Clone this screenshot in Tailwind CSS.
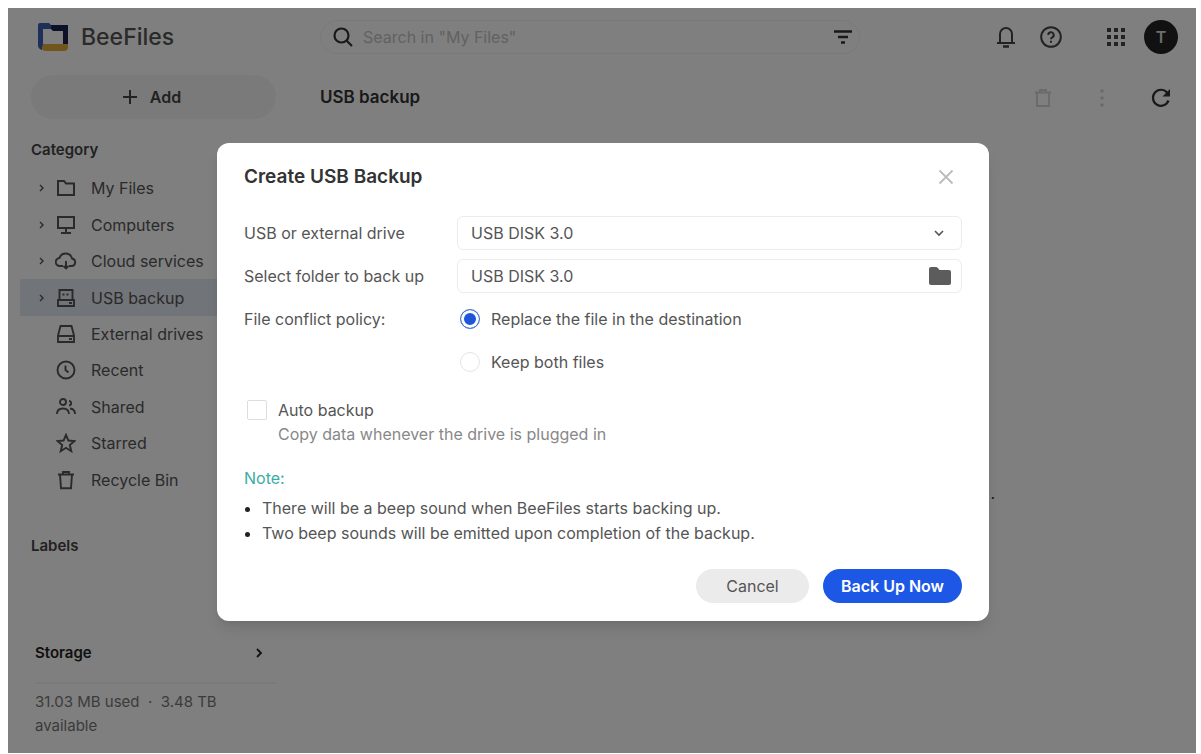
<!DOCTYPE html>
<html lang="en">
<head>
  <meta charset="UTF-8" />
  <meta name="viewport" content="width=device-width, initial-scale=1.0" />
  <title>BeeFiles - USB backup</title>
  <script src="https://cdn.jsdelivr.net/npm/@tailwindcss/browser@4"></script>
</head>
<body class="bg-white font-['Inter',sans-serif] text-[#555]">
  <div class="min-h-screen pt-2 pl-2 pr-[5px] pb-px flex">
    <div class="relative flex-1 flex bg-white">

      <!-- Sidebar -->
      <aside class="w-[312px] shrink-0 flex flex-col">
        <div class="h-[58px] pl-[30px] flex items-center gap-3">
          <svg class="w-[31px] h-7" viewBox="0 0 31 28" aria-hidden="true">
            <path d="M0 2a2 2 0 0 1 2-2h9l2 2v4H5v16l-1 5q-4-1-4-5z" fill="#3c60b4" />
            <path d="M13 2h17v19h-5V8H15l-2-2z" fill="#18224f" />
            <path d="M5 21h25v3q0 4-4 4H8q-4 0-4-3z" fill="#e0ad38" />
          </svg>
          <span class="text-[23px] font-medium">BeeFiles</span>
        </div>

        <button type="button" class="ml-[23px] mr-11 mt-[9px] h-11 rounded-full bg-[#f4f4f4] flex items-center justify-center gap-3 pr-1 text-base font-semibold text-[#444]">
          <svg class="w-4 h-4" viewBox="0 0 16 16" fill="none" stroke="currentColor" stroke-width="2" aria-hidden="true"><path d="M8 1v14M1 8h14" /></svg>
          Add
        </button>

        <h2 class="mt-[21px] ml-[23px] text-[15px] leading-5 font-semibold text-[#444]">Category</h2>
        <nav class="mt-[10px] ml-3 mr-11 h-[328px] grid auto-rows-fr text-base">
          <a href="#" class="flex items-center pl-[18px]">
            <svg class="w-2 h-2 mr-[10px]" viewBox="0 0 8 8" fill="none" stroke="currentColor" stroke-width="1.4"><path d="M2 1l3 3-3 3" /></svg>
            <svg class="w-5 h-5 mr-[15px]" viewBox="0 0 20 20" fill="none" stroke="currentColor" stroke-width="2"><path d="M2 3h6l2 2.500h8V17H2z" /></svg>
            My Files
          </a>
          <a href="#" class="flex items-center pl-[18px]">
            <svg class="w-2 h-2 mr-[10px]" viewBox="0 0 8 8" fill="none" stroke="currentColor" stroke-width="1.4"><path d="M2 1l3 3-3 3" /></svg>
            <svg class="w-5 h-5 mr-[15px]" viewBox="0 0 20 20" fill="none" stroke="currentColor" stroke-width="2"><path d="M2 2h16v11H2zM10 13v5M5 18h10" /></svg>
            Computers
          </a>
          <a href="#" class="flex items-center pl-[18px]">
            <svg class="w-2 h-2 mr-[9px]" viewBox="0 0 8 8" fill="none" stroke="currentColor" stroke-width="1.4"><path d="M2 1l3 3-3 3" /></svg>
            <svg class="w-[22px] h-5 mr-[14px]" viewBox="0 0 22 20" fill="none" stroke="currentColor" stroke-width="1.900"><path d="M8 15H5a4 4 0 0 1-.5-8A6.500 6.500 0 0 1 17 7.500a3.800 3.800 0 0 1 0 7.500h-3M11 10v8M8.500 15L11 17.500l2.500-2.500" /></svg>
            Cloud services
          </a>
          <a href="#" class="flex items-center pl-[18px] bg-[#e2e8f0]" aria-current="page">
            <svg class="w-2 h-2 mr-[10px]" viewBox="0 0 8 8" fill="none" stroke="currentColor" stroke-width="1.4"><path d="M2 1l3 3-3 3" /></svg>
            <svg class="w-5 h-5 mr-[15px]" viewBox="0 0 20 20" fill="none" stroke="currentColor" stroke-width="1.900"><path d="M3.500 11.500V2h13v9.500M2 12h16v6H2zM7.500 5.500v2M11.500 5.500v2M13 15h3" /></svg>
            USB backup
          </a>
          <a href="#" class="flex items-center pl-9">
            <svg class="w-5 h-5 mr-[15px]" viewBox="0 0 20 20" fill="none" stroke="currentColor" stroke-width="1.900"><path d="M4.500 2h11l2.500 9.500V18H2v-6.500zM2 12h16M13 15h3" /></svg>
            External drives
          </a>
          <a href="#" class="flex items-center pl-9">
            <svg class="w-5 h-5 mr-[15px]" viewBox="0 0 20 20" fill="none" stroke="currentColor" stroke-width="1.900"><circle cx="10" cy="10" r="8.500" /><path d="M9.500 5.500V10l3 2.500" /></svg>
            Recent
          </a>
          <a href="#" class="flex items-center pl-9">
            <svg class="w-5 h-5 mr-[15px]" viewBox="0 0 20 20" fill="none" stroke="currentColor" stroke-width="1.900"><circle cx="7" cy="5" r="3" /><path d="M1 17q0-5.500 6-5.500t6 5.500M13 4a2.200 2.200 0 1 1 0 4.400M14 11.500q5 .5 5 5.500" /></svg>
            Shared
          </a>
          <a href="#" class="flex items-center pl-9">
            <svg class="w-5 h-5 mr-[15px]" viewBox="0 0 20 20" fill="none" stroke="currentColor" stroke-width="1.900"><path d="M10 1.800l2.400 5.700 6.100.5-4.700 4 1.500 6.200-5.300-3.400-5.300 3.400L6.200 12 1.500 8l6.100-.5z" /></svg>
            Starred
          </a>
          <a href="#" class="flex items-center pl-9">
            <svg class="w-5 h-5 mr-[15px]" viewBox="0 0 20 20" fill="none" stroke="currentColor" stroke-width="1.900"><path d="M2 4.500h16M7 4.500V2h6v2.500M4 4.500l1 13.700h10l1-13.700" /></svg>
            Recycle Bin
          </a>
        </nav>

        <h2 class="mt-[38px] ml-[23px] text-[15px] leading-5 font-semibold text-[#444]">Labels</h2>

        <!-- Storage -->
        <div class="mt-auto pl-[27px] pr-[43px] pb-[15px]">
          <a href="#" class="flex items-center justify-between pr-[14px] text-[15px] leading-5 font-semibold text-[#222]">
            Storage
            <svg class="w-2 h-[10px]" viewBox="0 0 8 10" fill="none" stroke="currentColor" stroke-width="1.800"><path d="M2 1l4 4-4 4" /></svg>
          </a>
          <div class="mt-[19px] mb-[6px] h-[2px] bg-[#f4f4f4]"></div>
          <p class="pr-9 text-[15px] leading-6 text-[#777]">31.03 MB used&nbsp; · &nbsp;3.48 TB available</p>
        </div>
      </aside>

      <!-- Main -->
      <main class="flex-1 flex flex-col">
        <header class="h-[58px] pr-[18px] flex items-center">
          <div class="w-[540px] h-[34px] pl-3 pr-[6px] flex items-center gap-[10px] border border-[#f2f2f2] rounded-full">
            <svg class="w-5 h-5 text-[#333]" viewBox="0 0 20 20" fill="none" stroke="currentColor" stroke-width="2.200"><circle cx="8.500" cy="8.500" r="7" /><path d="M13.500 13.500l5.500 5.500" /></svg>
            <input type="search" aria-label="Search" placeholder='Search in "My Files"' class="flex-1 min-w-0 text-base outline-none placeholder:text-[#c4c4c4]" />
            <button type="button" aria-label="Filter" class="text-[#333]">
              <svg class="w-5 h-5" viewBox="0 0 20 20" fill="none" stroke="currentColor" stroke-width="2.400"><path d="M1 4.500h18M5 10h10M8 15.500h4" /></svg>
            </button>
          </div>
          <div class="ml-auto flex items-center text-[#444]">
            <button type="button" aria-label="Notifications" class="mr-6">
              <svg class="w-5 h-[22px]" viewBox="0 0 20 22" fill="none" stroke="currentColor" stroke-width="2"><path d="M1 17h18M4 17V8a6 6 0 0 1 12 0v9" /><path d="M7 20.500h6" stroke-width="2.500" /></svg>
            </button>
            <button type="button" aria-label="Help" class="mr-[45px]">
              <svg class="w-[22px] h-[22px]" viewBox="0 0 22 22" fill="none" stroke="currentColor" stroke-width="2"><circle cx="11" cy="11" r="9.800" /><path d="M8.300 9a2.700 2.700 0 1 1 3.900 2.300q-1.200.6-1.200 1.900M11 14.800v2" /></svg>
            </button>
            <button type="button" aria-label="Apps" class="mr-[19px]">
              <svg class="w-[18px] h-[18px]" viewBox="0 0 18 18" fill="currentColor"><path d="M0 0h4v4H0zM7 0h4v4H7zM14 0h4v4h-4zM0 7h4v4H0zM7 7h4v4H7zM14 7h4v4h-4zM0 14h4v4H0zM7 14h4v4H7zM14 14h4v4h-4z" /></svg>
            </button>
            <button type="button" aria-label="Account" class="w-[34px] h-[34px] rounded-full bg-[#222] text-[#ddd] text-base font-semibold">T</button>
          </div>
        </header>

        <div class="mt-[10px] h-11 pr-[25px] flex items-center">
          <h1 class="text-[17px] font-semibold text-[#333]">USB backup</h1>
          <div class="ml-auto flex items-center">
            <button type="button" aria-label="Delete" class="mr-[47px] text-[#d4d4d4]" disabled>
              <svg class="w-5 h-5" viewBox="0 0 20 20" fill="none" stroke="currentColor" stroke-width="1.800"><path d="M2 4.500h16M7 4.500V2h6v2.500M4 4.500V18h12V4.500" /></svg>
            </button>
            <button type="button" aria-label="More" class="mr-[47px] text-[#d4d4d4]" disabled>
              <svg class="w-1 h-[18px]" viewBox="0 0 4 18" fill="currentColor"><circle cx="2" cy="2" r="1.800" /><circle cx="2" cy="9" r="1.800" /><circle cx="2" cy="16" r="1.800" /></svg>
            </button>
            <button type="button" aria-label="Refresh" class="text-[#333]">
              <svg class="w-5 h-5" viewBox="0 0 20 20" fill="none" stroke="currentColor" stroke-width="2.200"><path d="M17.500 12.500A8 8 0 1 1 16 4.500l2 2.500" /><path d="M19 1v7.500h-7.500z" fill="currentColor" stroke="none" /></svg>
            </button>
          </div>
        </div>

        <div class="flex-1 flex items-center justify-end pt-28 pr-[201px] text-base text-[#333]">.</div>
      </main>

      <!-- Create USB Backup dialog -->
      <div class="absolute inset-0 bg-black/50 flex items-center justify-center pl-[2px] pt-[3px]">
        <form role="dialog" aria-labelledby="dialogTitle" class="w-full max-w-[772px] rounded-xl bg-white shadow-lg pt-5 px-[27px] pb-[18px] text-base leading-6 text-[#555]">
          <div class="flex items-center justify-between pr-2">
            <h2 id="dialogTitle" class="text-[19px] leading-7 font-semibold text-[#333]">Create USB Backup</h2>
            <button type="button" aria-label="Close" class="text-[#bbb]">
              <svg class="w-4 h-4" viewBox="0 0 16 16" fill="none" stroke="currentColor" stroke-width="1.800"><path d="M1.500 1.500l13 13M14.500 1.500l-13 13" /></svg>
            </button>
          </div>

          <div class="mt-[25px] grid grid-cols-[213px_1fr] auto-rows-[34px] gap-y-[9px] items-center">
            <label for="drive">USB or external drive</label>
            <div class="relative h-full">
              <select id="drive" class="w-full h-full appearance-none border border-[#ececec] rounded-md px-[13px]">
                <option>USB DISK 3.0</option>
              </select>
              <svg class="absolute right-[18px] top-[13px] w-[10px] h-2 pointer-events-none" viewBox="0 0 10 8" fill="none" stroke="currentColor" stroke-width="1.600"><path d="M1 2l4 4 4-4" /></svg>
            </div>

            <label for="folder">Select folder to back up</label>
            <div class="h-full flex items-center border border-[#ececec] rounded-md pl-[13px] pr-[10px]">
              <input type="text" id="folder" value="USB DISK 3.0" class="flex-1 min-w-0 outline-none" />
              <button type="button" aria-label="Browse" class="text-[#5c5c5c]">
                <svg class="w-[22px] h-[18px]" viewBox="0 0 22 18" fill="currentColor"><path d="M0 2q0-2 2-2h5q1 0 1.700.8L10.500 3H20q2 0 2 2v11q0 2-2 2H2q-2 0-2-2z" /></svg>
              </button>
            </div>

            <span>File conflict policy:</span>
            <label class="flex items-center gap-[11px] pl-[3px]">
              <input type="radio" name="policy" checked class="appearance-none w-5 h-5 rounded-full border border-[#e4e4e4] checked:border-[#4a78d8] checked:bg-[#1d57d8] checked:shadow-[inset_0_0_0_3px_#fff]" />
              Replace the file in the destination
            </label>
            <label class="col-start-2 flex items-center gap-[11px] pl-[3px]">
              <input type="radio" name="policy" class="appearance-none w-5 h-5 rounded-full border border-[#e4e4e4] checked:border-[#4a78d8] checked:bg-[#1d57d8] checked:shadow-[inset_0_0_0_3px_#fff]" />
              Keep both files
            </label>
          </div>

          <div class="mt-[19px] pl-[3px] flex gap-[11px]">
            <input type="checkbox" id="auto" class="mt-[2px] appearance-none w-5 h-5 shrink-0 rounded-xs border border-[#ddd] checked:bg-[#1d57d8]" />
            <div>
              <label for="auto" class="block">Auto backup</label>
              <p class="text-[#888]">Copy data whenever the drive is plugged in</p>
            </div>
          </div>

          <p class="mt-5 text-[#3aada5]">Note:</p>
          <ul class="mt-[6px] pl-[18px] list-disc leading-[25px] marker:text-[#222]">
            <li>There will be a beep sound when BeeFiles starts backing up.</li>
            <li>Two beep sounds will be emitted upon completion of the backup.</li>
          </ul>

          <div class="mt-[23px] flex justify-end gap-[14px]">
            <button type="button" class="w-[113px] h-[34px] rounded-full bg-[#ebebeb]">Cancel</button>
            <button type="submit" class="w-[139px] h-[34px] rounded-full bg-[#1d57e5] text-white font-semibold">Back Up Now</button>
          </div>
        </form>
      </div>
    </div>
  </div>
</body>
</html>
